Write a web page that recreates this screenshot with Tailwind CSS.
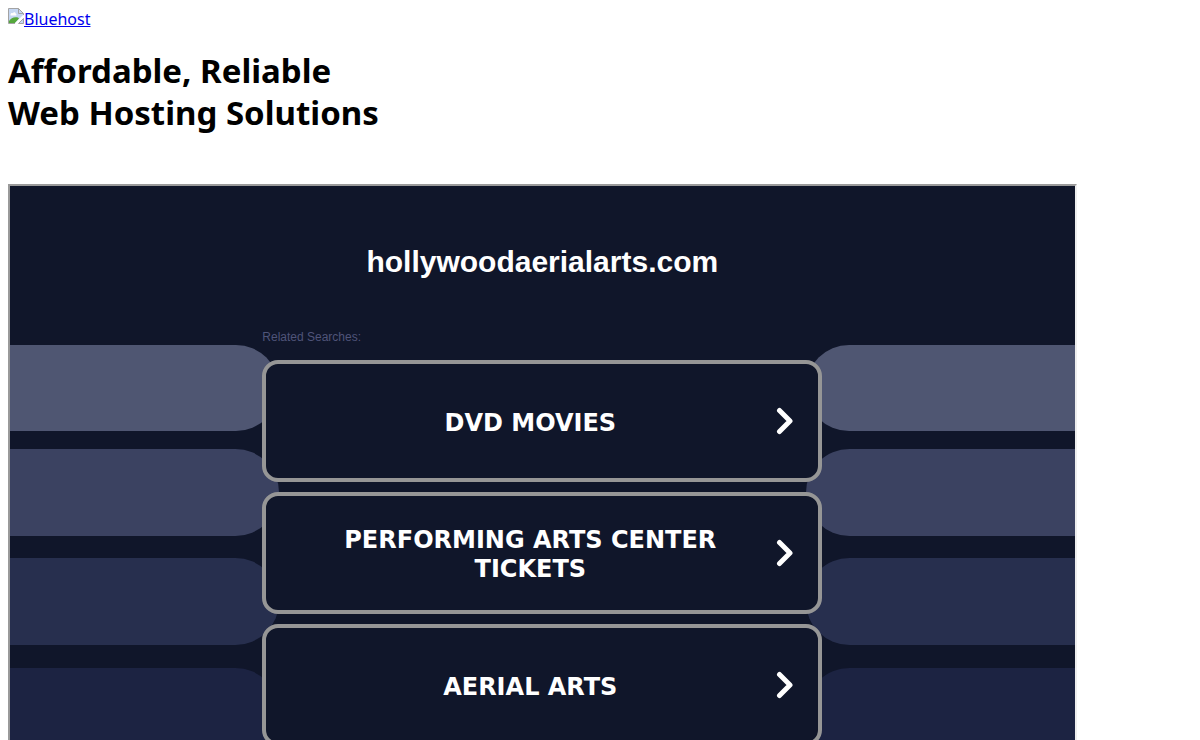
<!DOCTYPE html>
<html lang="en">

<head>
    <meta charset="UTF-8">
    <meta name="viewport" content="width=device-width, initial-scale=1.0">
    <script src="https://cdn.jsdelivr.net/npm/@tailwindcss/browser@4"></script>
    <title>Bluehost</title>
</head>
<body class="bg-white px-2 pt-2 font-['Noto_Sans',sans-serif] text-black">
    <header>
        <a href="#" class="flex items-start text-[16px] leading-[22px] text-[#0000ee] underline">
            <!-- broken image icon -->
            <svg class="h-4 w-4 shrink-0" viewBox="0 0 16 16" aria-hidden="true">
                <path d="M.5.5h10l5 5v3l-7 7h-8z" fill="#c5d7f3" />
                <path d="M1 15v-2c2-3 5-4.500 9-3.500l1 1L7 15z" fill="#55a83c" />
                <path d="M2.500 6.500c0-1.500 1.500-2 2.300-1.300C5.500 3.500 8 4 7.800 6c1 0 1 1.500 0 1.500H3c-.5 0-.5-.5-.5-1z" fill="#fff" />
                <path d="M.5 15.500V.5h10l5 5v2M10.500.5v5h5M.5 15.500H7" fill="none" stroke="#a3a3a3" />
                <path d="M15.500 10.500v5h-5z" fill="#c5d7f3" stroke="#a3a3a3" />
                <path d="M16 7.500L7.500 16" stroke="#fff" stroke-width="2" />
            </svg>
            <span>Bluehost</span>
        </a>
        <h1 class="mt-5 text-[33px] leading-[42px] font-bold">Affordable, Reliable<br>Web Hosting Solutions</h1>
    </header>

    <main class="relative mt-[50px] w-[calc(90%+3px)] overflow-hidden border-2 border-t-[#9a9a9a] border-r-[#eeeeee] border-b-[#eeeeee] border-l-[#9a9a9a] bg-[#10162a] pb-6 font-['Liberation_Sans',Arial,sans-serif]">
        <!-- background stripes -->
        <div class="absolute inset-0 flex justify-between pt-[159px]" aria-hidden="true">
            <div class="w-[269px]">
                <div class="h-[86px] rounded-r-full bg-[#4f5672]"></div>
                <div class="mt-[18px] h-[87px] rounded-r-full bg-[#3b4261]"></div>
                <div class="mt-[22px] h-[87px] rounded-r-full bg-[#272f4e]"></div>
                <div class="mt-[23px] h-[87px] rounded-r-full bg-[#1c2342]"></div>
            </div>
            <div class="w-[269px]">
                <div class="h-[86px] rounded-l-full bg-[#4f5672]"></div>
                <div class="mt-[18px] h-[87px] rounded-l-full bg-[#3b4261]"></div>
                <div class="mt-[22px] h-[87px] rounded-l-full bg-[#272f4e]"></div>
                <div class="mt-[23px] h-[87px] rounded-l-full bg-[#1c2342]"></div>
            </div>
        </div>

        <div class="relative mx-auto max-w-[560px]">
            <h2 class="pt-[58px] text-center text-[30px] leading-[36px] font-bold text-white">hollywoodaerialarts.com</h2>
            <p class="mt-[50px] text-[12px] leading-[14px] text-[#4f5479]">Related Searches:</p>
            <ul class="mt-4 flex flex-col gap-[10px] font-['DejaVu_Sans',Verdana,sans-serif] text-[24px] leading-[29px] font-bold text-white">
                <li>
                    <a href="#" class="flex h-[122px] items-center rounded-2xl border-4 border-[#969696] bg-[#10162a] pr-6 pl-[18px]">
                        <span class="flex-1 pt-1 text-center">DVD MOVIES</span>
                        <svg class="h-7 w-[18px] shrink-0" viewBox="0 0 18 28" fill="none" stroke="#fff" stroke-width="5" stroke-linecap="round" stroke-linejoin="round" aria-hidden="true"><path d="M3.500 3.500L14 14 3.500 24.500" /></svg>
                    </a>
                </li>
                <li>
                    <a href="#" class="flex h-[122px] items-center rounded-2xl border-4 border-[#969696] bg-[#10162a] pr-6 pl-[18px]">
                        <span class="flex-1 pt-1 text-center">PERFORMING ARTS CENTER<br>TICKETS</span>
                        <svg class="h-7 w-[18px] shrink-0" viewBox="0 0 18 28" fill="none" stroke="#fff" stroke-width="5" stroke-linecap="round" stroke-linejoin="round" aria-hidden="true"><path d="M3.500 3.500L14 14 3.500 24.500" /></svg>
                    </a>
                </li>
                <li>
                    <a href="#" class="flex h-[122px] items-center rounded-2xl border-4 border-[#969696] bg-[#10162a] pr-6 pl-[18px]">
                        <span class="flex-1 pt-1 text-center">AERIAL ARTS</span>
                        <svg class="h-7 w-[18px] shrink-0" viewBox="0 0 18 28" fill="none" stroke="#fff" stroke-width="5" stroke-linecap="round" stroke-linejoin="round" aria-hidden="true"><path d="M3.500 3.500L14 14 3.500 24.500" /></svg>
                    </a>
                </li>
            </ul>
        </div>
    </main>
</body>

</html>
